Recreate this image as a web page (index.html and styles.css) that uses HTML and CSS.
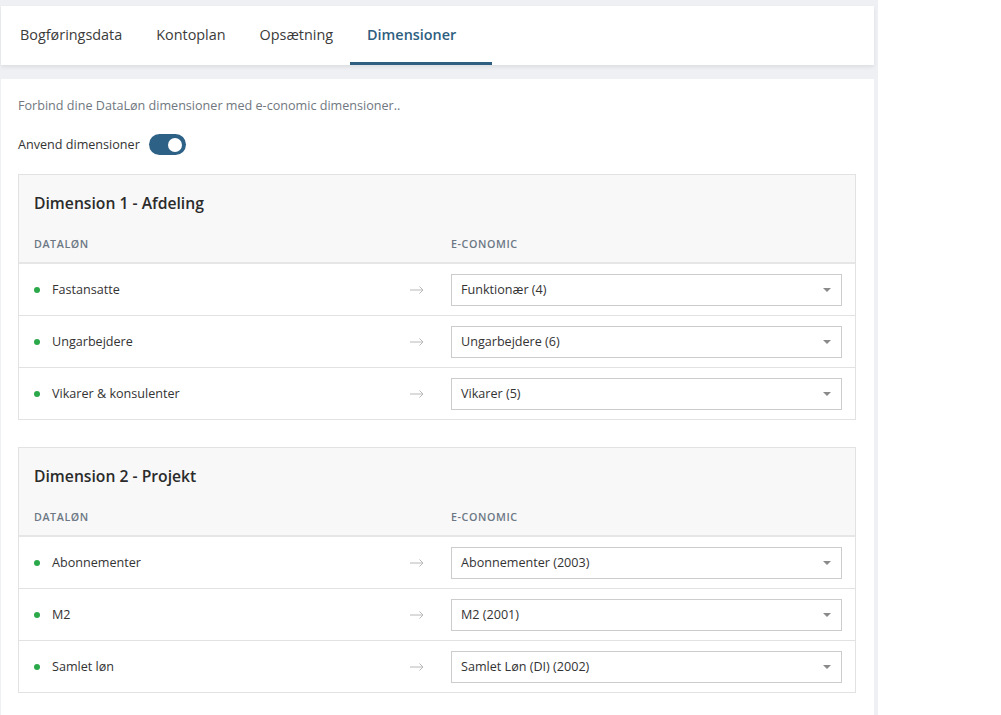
FILE: index.html
```html
<!DOCTYPE html>
<html lang="da">

<head>
    <meta charset="UTF-8">
    <meta name="viewport" content="width=device-width, initial-scale=1.0">
    <title>Dimensioner</title>
    <link rel="stylesheet" href="styles.css">
</head>

<body>
    <div class="page">
        <nav class="tabs">
            <a class="tab">Bogføringsdata</a>
            <a class="tab">Kontoplan</a>
            <a class="tab">Opsætning</a>
            <a class="tab active">Dimensioner</a>
        </nav>

        <div class="content">
            <p class="intro">Forbind dine DataLøn dimensioner med e-conomic dimensioner..</p>

            <div class="toggle-row">
                <span>Anvend dimensioner</span>
                <span class="toggle"><span class="knob"></span></span>
            </div>

            <div class="dimension">
                <div class="dimension-head">
                    <h2>Dimension 1 - Afdeling</h2>
                    <div class="grid col-titles">
                        <span>Dataløn</span>
                        <span>E-conomic</span>
                    </div>
                </div>
                <div class="grid row">
                    <div class="label"><span class="dot"></span>Fastansatte
                        <svg class="arrow" width="14" height="8" viewBox="0 0 14 8"><path d="M0 4h13M9.5 0.5L13 4l-3.5 3.5" /></svg>
                    </div>
                    <div class="select">Funktionær (4)<span class="caret"></span></div>
                </div>
                <div class="grid row">
                    <div class="label"><span class="dot"></span>Ungarbejdere
                        <svg class="arrow" width="14" height="8" viewBox="0 0 14 8"><path d="M0 4h13M9.5 0.5L13 4l-3.5 3.5" /></svg>
                    </div>
                    <div class="select">Ungarbejdere (6)<span class="caret"></span></div>
                </div>
                <div class="grid row">
                    <div class="label"><span class="dot"></span>Vikarer &amp; konsulenter
                        <svg class="arrow" width="14" height="8" viewBox="0 0 14 8"><path d="M0 4h13M9.5 0.5L13 4l-3.5 3.5" /></svg>
                    </div>
                    <div class="select">Vikarer (5)<span class="caret"></span></div>
                </div>
            </div>

            <div class="dimension">
                <div class="dimension-head">
                    <h2>Dimension 2 - Projekt</h2>
                    <div class="grid col-titles">
                        <span>Dataløn</span>
                        <span>E-conomic</span>
                    </div>
                </div>
                <div class="grid row">
                    <div class="label"><span class="dot"></span>Abonnementer
                        <svg class="arrow" width="14" height="8" viewBox="0 0 14 8"><path d="M0 4h13M9.5 0.5L13 4l-3.5 3.5" /></svg>
                    </div>
                    <div class="select">Abonnementer (2003)<span class="caret"></span></div>
                </div>
                <div class="grid row">
                    <div class="label"><span class="dot"></span>M2
                        <svg class="arrow" width="14" height="8" viewBox="0 0 14 8"><path d="M0 4h13M9.5 0.5L13 4l-3.5 3.5" /></svg>
                    </div>
                    <div class="select">M2 (2001)<span class="caret"></span></div>
                </div>
                <div class="grid row">
                    <div class="label"><span class="dot"></span>Samlet løn
                        <svg class="arrow" width="14" height="8" viewBox="0 0 14 8"><path d="M0 4h13M9.5 0.5L13 4l-3.5 3.5" /></svg>
                    </div>
                    <div class="select">Samlet Løn (DI) (2002)<span class="caret"></span></div>
                </div>
            </div>
        </div>
    </div>
</body>

</html>
```

FILE: styles.css
```css
* {
    box-sizing: border-box;
}

body {
    font-family: 'Open Sans', 'Noto Sans', sans-serif;
    background-color: #ffffff;
    color: #333333;
    margin: 0;
}

.page {
    width: 878px;
    height: 715px;
    overflow: hidden;
    background-color: #eff0f4;
    padding: 6px 4px 0 1px;
}

.tabs {
    display: flex;
    height: 59px;
    background-color: #fff;
    box-shadow: 0 2px 4px rgba(0, 0, 0, 0.08);
    padding-left: 2px;
}

.tab {
    display: flex;
    align-items: center;
    padding: 0 17px;
    font-size: 14.4px;
    color: #3b3b3b;
    border-bottom: 3px solid transparent;
    padding-top: 1px;
}

.tab.active {
    min-width: 142px;
    font-weight: 600;
    color: #2e5e80;
    border-bottom-color: #2e5e80;
}

.content {
    background-color: #fff;
    margin-top: 14px;
    min-height: 640px;
    padding: 18px 18px 20px 17px;
}

.intro {
    font-size: 12.6px;
    line-height: 18px;
    color: #707780;
    margin: 0 0 19px;
}

.toggle-row {
    display: flex;
    align-items: center;
    gap: 9px;
    font-size: 12.6px;
    color: #333;
    margin-bottom: 19px;
}

.toggle {
    display: inline-flex;
    align-items: center;
    justify-content: flex-end;
    width: 37px;
    height: 21px;
    border-radius: 11px;
    background-color: #2d6186;
    padding: 0 4px;
}

.knob {
    width: 14px;
    height: 14px;
    border-radius: 50%;
    background-color: #fff;
}

.dimension {
    border: 1px solid #e2e2e2;
    margin-bottom: 27px;
}

.dimension-head {
    background-color: #f8f8f8;
    border-bottom: 2px solid #e6e6e6;
}

.dimension-head h2 {
    font-size: 15.7px;
    font-weight: 600;
    color: #2b2b2b;
    margin: 0;
    padding: 16px 15px 0;
    line-height: 24px;
}

.grid {
    display: grid;
    grid-template-columns: 1fr 391px;
    padding: 0 13px 0 15px;
}

.col-titles {
    height: 47px;
    align-items: center;
    padding-top: 10px;
    font-size: 10.7px;
    font-weight: 600;
    text-transform: uppercase;
    letter-spacing: 0.6px;
    color: #6c7784;
}

.row {
    height: 52px;
    align-items: center;
    border-bottom: 1px solid #e2e2e2;
    font-size: 12.6px;
}

.row:last-child {
    border-bottom: none;
    height: 51px;
}

.label {
    display: flex;
    align-items: center;
    color: #333;
}

.dot {
    width: 6px;
    height: 6px;
    border-radius: 50%;
    background-color: #2ba84a;
    margin: 0 12px 0 0;
}

.arrow {
    margin-left: auto;
    margin-right: 27px;
    fill: none;
    stroke: #b8b8b8;
    stroke-width: 1;
}

.select {
    display: flex;
    align-items: center;
    justify-content: space-between;
    height: 32px;
    border: 1px solid #cccccc;
    padding: 0 10px 0 9px;
    color: #333;
    background-color: #fff;
}

.caret {
    width: 0;
    height: 0;
    border-left: 4px solid transparent;
    border-right: 4px solid transparent;
    border-top: 4px solid #8a8a8a;
}
```
